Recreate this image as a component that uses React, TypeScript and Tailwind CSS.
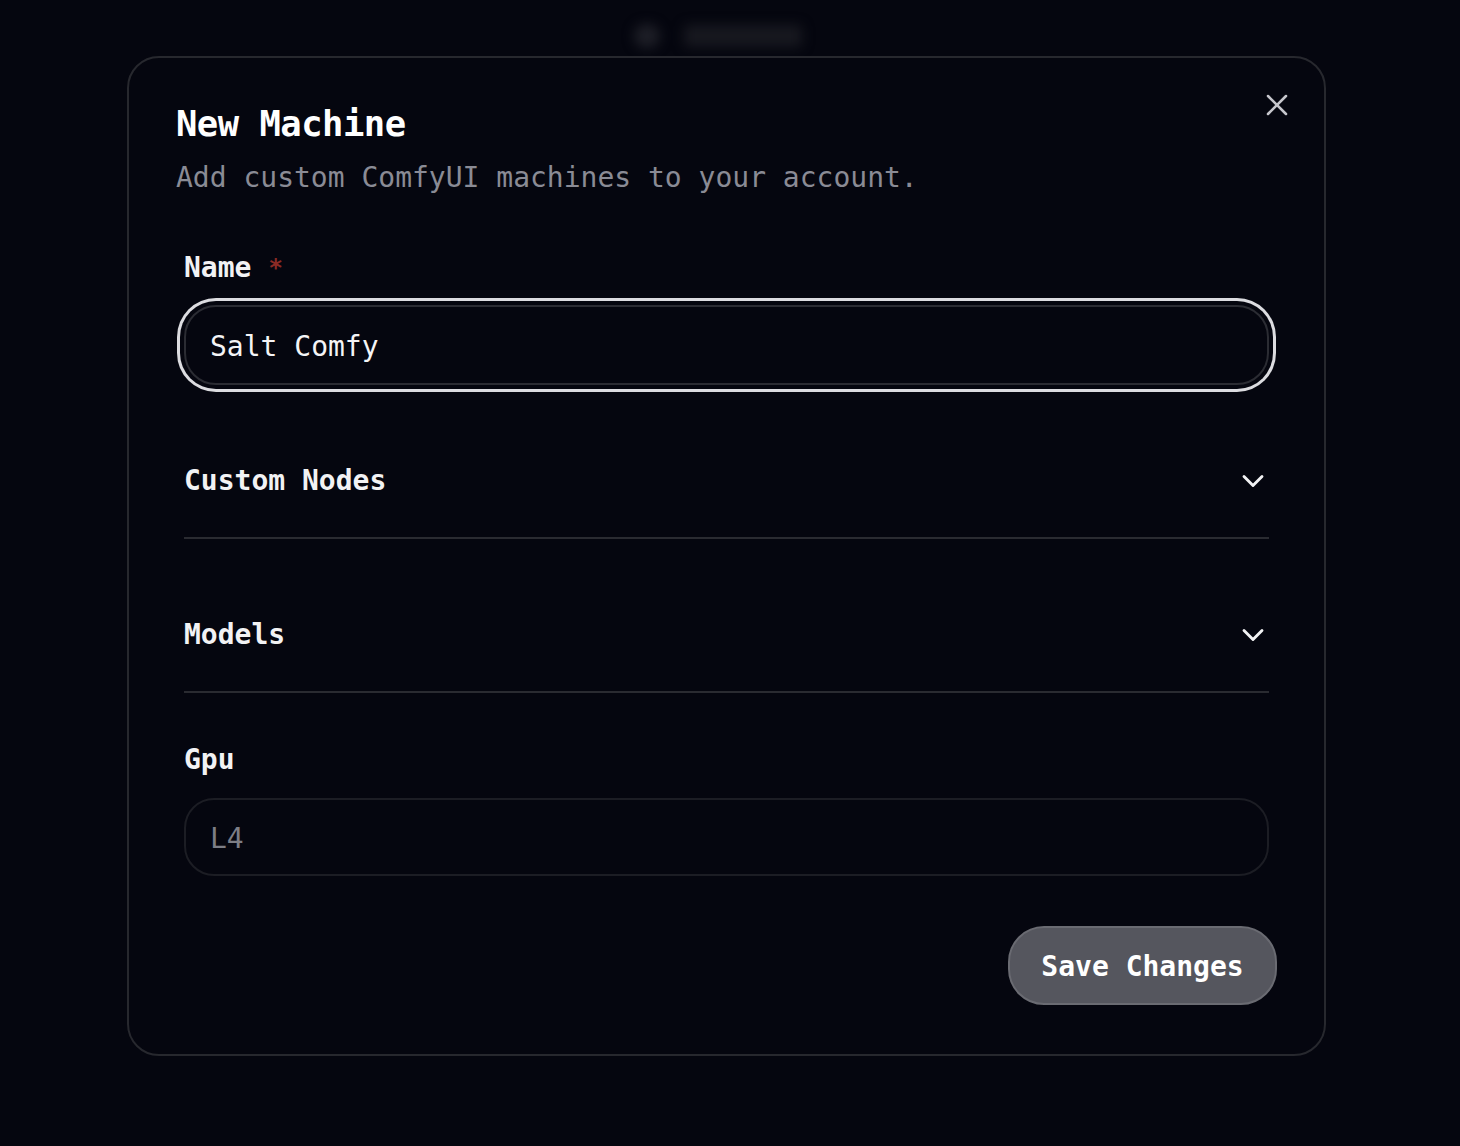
import { X, ChevronDown } from "lucide-react";

const mono = "font-['DejaVu_Sans_Mono','Liberation_Mono',monospace]";

/* ── Collapsible section row ─────────────────────────────────────────────── */
function SectionRow({ title }: { title: string }) {
  return (
    <div className="flex items-center justify-between border-b-2 border-[#2a2b31] pb-[39px] pt-[79px]">
      <span className="text-[28px] font-semibold leading-[34px] text-[#f2f2f4]">{title}</span>
      <ChevronDown className="-my-[1px] mr-[-2px] h-[36px] w-[36px] text-[#f2f2f4]" strokeWidth={1.9} />
    </div>
  );
}

export default function App() {
  return (
    <div className={`relative min-h-[1146px] w-full overflow-hidden bg-[#05060f] ${mono}`}>
      {/* blurred backdrop header */}
      <div className="absolute left-[634px] top-[24px] flex items-center gap-[24px] blur-[6px]">
        <div className="h-[24px] w-[26px] rounded-full bg-[#1d1e26]" />
        <div className="h-[22px] w-[118px] rounded bg-[#17181f]" />
      </div>

      <div className="pl-[127px] pt-[56px]">
        <div className="relative w-[1199px] rounded-[32px] border-2 border-[#27282e] bg-[#05060f] px-[47px] pb-[49px] pt-[46px]">
          <button className="absolute right-[29px] top-[29px] text-[#c6c6cc]">
            <X className="h-[36px] w-[36px]" strokeWidth={1.7} />
          </button>

          <h2 className="text-[35.5px] font-bold leading-[40px] tracking-[-0.5px] text-white">New Machine</h2>
          <p className="mt-[18px] text-[28px] leading-[32px] text-[#8a8b95]">
            Add custom ComfyUI machines to your account.
          </p>

          <div className="px-[8px]">
            <div className="mt-[57px] flex items-center gap-[17px] text-[28px] font-semibold leading-[34px] text-[#f2f2f4]">
              Name <span className="text-[24px] text-[#8b2a25]">*</span>
            </div>
            <div className="mt-[20px] flex h-[80px] items-center rounded-[32px] border-2 border-[#2b2c33] bg-[#05060f] px-[24px] pt-[4px] text-[28px] text-[#f4f4f6] ring-[3px] ring-[#dcdce0] ring-offset-[4px] ring-offset-[#05060f]">
              Salt Comfy
            </div>

            <SectionRow title="Custom Nodes" />
            <SectionRow title="Models" />

            <div className="mt-[50px] text-[28px] font-semibold leading-[34px] text-[#f2f2f4]">Gpu</div>
            <div className="mt-[21px] flex h-[78px] items-center rounded-[30px] border-2 border-[#1c1d24] px-[24px] pt-[3px] text-[28px] text-[#7d7e86]">
              L4
            </div>
          </div>

          <div className="mt-[50px] flex justify-end">
            <button className="h-[79px] w-[269px] rounded-[36px] border-2 border-[#6a6b72] bg-[#55565e] pt-[2px] text-[28px] font-bold text-white">
              Save Changes
            </button>
          </div>
        </div>
      </div>
    </div>
  );
}
